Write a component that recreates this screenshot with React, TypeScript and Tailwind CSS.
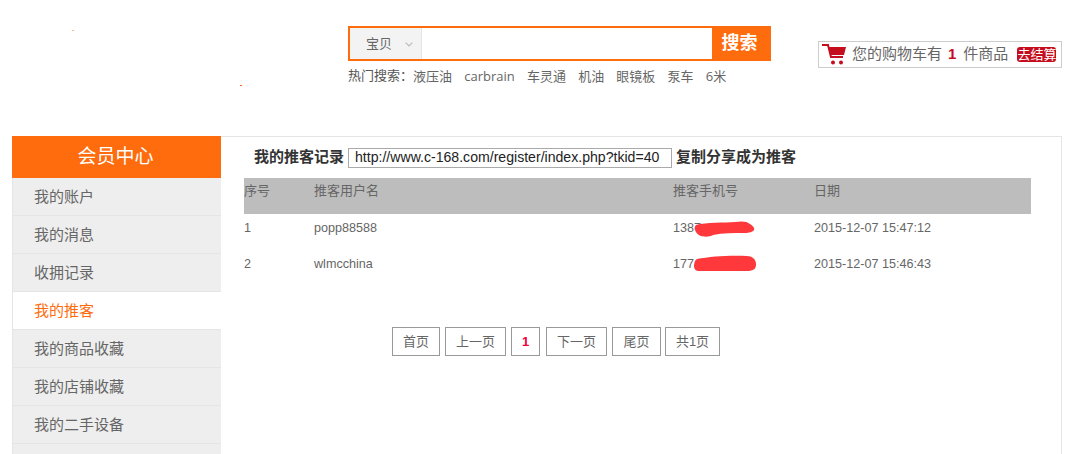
const sans = "font-['Liberation_Sans','Noto_Sans_CJK_SC',sans-serif]";

const menuItems = ['我的账户', '我的消息', '收拥记录', '我的推客', '我的商品收藏', '我的店铺收藏', '我的二手设备', ''];
const hotWords = ['液压油', 'carbrain', '车灵通', '机油', '眼镜板', '泵车', '6米'];
const pages = [
  { label: '首页', cls: 'w-[48px]' },
  { label: '上一页', cls: 'w-[61px] ml-[5px]' },
  { label: '1', cls: 'w-[29px] ml-[5px]', active: true },
  { label: '下一页', cls: 'w-[61px] ml-[6px]' },
  { label: '尾页', cls: 'w-[49px] ml-[5px]' },
  { label: '共1页', cls: 'w-[55px] ml-[4px]' },
];
const rows = [
  { id: '1', name: 'popp88588', phone: '1387', date: '2015-12-07 15:47:12', scribble: 'M696 225c10-3 29-2 39-3 6-1 12-1 15 2 3 2 5 4 4 6-1 2-5 3-9 3-12 0-22 0-32 2-3 2-9 2-12 1-3-1-5-3-6-6-1-2 0-4 1-5z' },
  { id: '2', name: 'wlmcchina', phone: '177', date: '2015-12-07 15:46:43', scribble: 'M697 259c14-3 36-4 50-3 5 0 9 3 9 8 0 4-1 6-7 7-14 0-36 0-50 0-3 0-5-2-5-5 0-3 1-6 3-7z' },
];

function CartIcon() {
  return (
    <svg width="25" height="22" viewBox="0 0 25 22" className="shrink-0">
      <path d="M0 1h6l3 12h12" fill="none" stroke="#c40d1d" strokeWidth="2" />
      <path d="M7 3h17l-2 8H9z" fill="#c40d1d" />
      <circle cx="11" cy="18.500" r="2" fill="#c40d1d" />
      <circle cx="19" cy="18.500" r="2" fill="#c40d1d" />
    </svg>
  );
}

function Header() {
  return (
    <header className="relative h-[136px]">
      <span className="absolute left-[72px] top-[30px] h-px w-[2px] bg-[#f5b48a]" />
      <span className="absolute left-[240px] top-[85px] h-px w-[2px] bg-[#ff6a1a]" />
      <div className="flex items-start pt-[26px] pl-[348px]">
        <div className="w-[423px]">
          <div className="flex h-[35px] border-2 border-r-0 border-[#fe6c0e]">
            <div className="flex w-[72px] items-center border-r border-[#e6e6e6] bg-[#f3f3f3] pl-[16px] text-[13px] text-[#666]">
              宝贝
              <svg width="8" height="5" viewBox="0 0 8 5" className="ml-[13px] mt-[2px]">
                <path d="M.7.7 4 4 7.300.7" fill="none" stroke="#bbb" strokeWidth="1.200" />
              </svg>
            </div>
            <div className="flex-1 bg-white" />
            <div className="flex w-[59px] items-center justify-center bg-[#fe6c0e] pr-[4px] text-[18px] font-bold text-white">搜索</div>
          </div>
          <div className="mt-[5px] flex h-[20px] items-center text-[13px] leading-[20px] text-[#666]">
            <span className="text-[#555]">热门搜索：</span>
            <span className="flex gap-[12.2px]">
              {hotWords.map(word => (
                <span key={word} className="font-['Open_Sans','Noto_Sans_CJK_SC',sans-serif]">{word}</span>
              ))}
            </span>
          </div>
        </div>
        <div className="ml-[47px] mt-[15px] flex h-[27px] w-[244px] items-center border border-[#ccc] pl-[3px] text-[15px] text-[#666]">
          <CartIcon />
          <span className="ml-[5px]">您的购物车有</span>
          <b className="ml-[6px] mr-[7px] text-[#c40d1d]">1</b>
          <span>件商品</span>
          <span className="ml-[9px] flex h-[15px] w-[39px] items-center justify-center rounded-[3px] bg-[#c40d1d] text-[13px] leading-none text-white">去结算</span>
        </div>
      </div>
    </header>
  );
}

function Sidebar() {
  return (
    <aside className="w-[209px] shrink-0">
      <div className="flex h-[42px] items-center justify-center bg-[#fe6c0e] pr-[2px] pt-[1px] text-[19px] text-white">会员中心</div>
      <ul className="border-l border-[#e5e5e5]">
        {menuItems.map((item, i) => (
          <li
            key={i}
            className={`flex h-[38px] items-center border-b border-[#e5e5e5] pl-[21px] pt-[1px] text-[15px] ${
              item === '我的推客' ? 'bg-white text-[#fe6c0e]' : 'bg-[#eeeeee] text-[#666]'
            }`}
          >
            {item}
          </li>
        ))}
      </ul>
    </aside>
  );
}

function RecordTable() {
  return (
    <div className="relative ml-[23px] w-[787px] text-[12.600px] leading-[16px] text-[#666]">
      <div className="grid h-[36px] grid-cols-[70px_359px_141px_1fr] bg-[#bdbdbd] pt-[5px] text-[13px]">
        <span>序号</span>
        <span>推客用户名</span>
        <span>推客手机号</span>
        <span>日期</span>
      </div>
      {rows.map(row => (
        <div key={row.id} className="grid h-[36px] grid-cols-[70px_359px_141px_1fr] pt-[6px]">
          <span>{row.id}</span>
          <span>{row.name}</span>
          <span>{row.phone}</span>
          <span>{row.date}</span>
        </div>
      ))}
      <svg width="787" height="108" viewBox="244 178 787 108" className="absolute left-0 top-0">
        {rows.map(row => (
          <path key={row.id} d={row.scribble} fill="#ff383b" />
        ))}
      </svg>
    </div>
  );
}

function Pagination() {
  return (
    <div className="ml-[171px] mt-[41px] flex">
      {pages.map(page => (
        <span
          key={page.label}
          className={`flex h-[29px] items-center justify-center border border-[#999] text-[13px] ${page.cls} ${
            page.active ? 'font-bold text-[#f0003c]' : 'text-[#666]'
          }`}
        >
          {page.label}
        </span>
      ))}
    </div>
  );
}

export default function App() {
  return (
    <div className={`h-[454px] overflow-hidden bg-white ${sans}`}>
      <Header />
      <main className="ml-[12px] flex w-[1050px]">
        <Sidebar />
        <section className="h-[340px] flex-1 border-r border-t border-[#e5e5e5]">
          <div className="ml-[33px] flex h-[41px] items-center text-[15px] font-bold text-[#333]">
            <span>我的推客记录</span>
            <div className="ml-[4px] flex h-[20px] w-[324px] items-center border border-[#aaa] pl-[6px] text-[14.100px] font-normal text-[#222]">
              http://www.c-168.com/register/index.php?tkid=40
            </div>
            <span className="ml-[4px]">复制分享成为推客</span>
          </div>
          <RecordTable />
          <Pagination />
        </section>
      </main>
    </div>
  );
}
